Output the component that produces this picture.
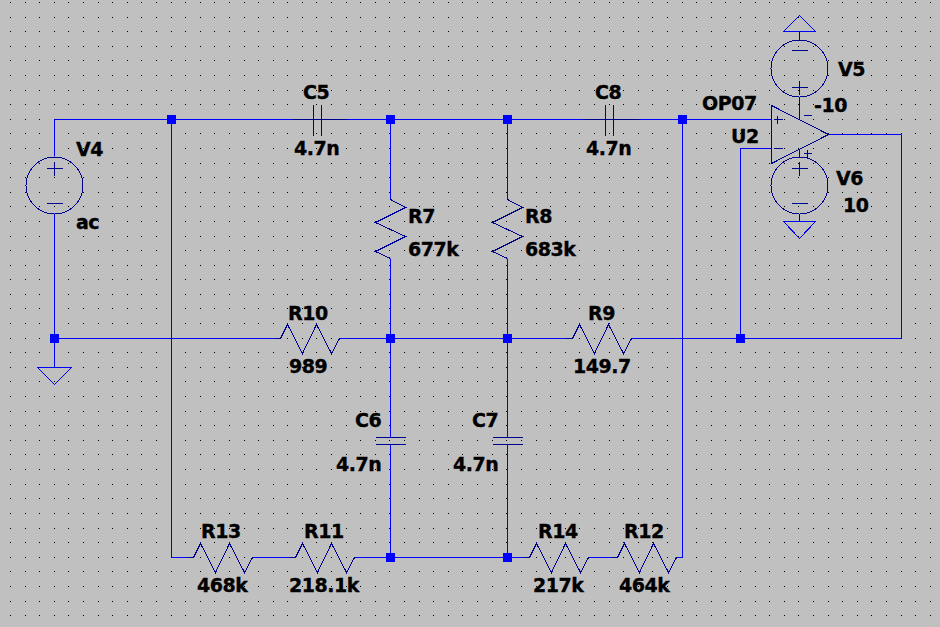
const WIRE = '#0000ff';
const PART = '#000090';

const dotsX = Array.from({ length: 65 }, (_, i) => Math.floor(10.4 + 14.6 * i));
const dotsY = Array.from({ length: 43 }, (_, i) => Math.floor(2.4 + 14.6 * i));

// wires as polylines
const wires = [
  '54,156 54,119 771,119',
  '54,213 54,367',
  '171,119 171,557 193,557',
  '252,557 295,557',
  '354,557 529,557',
  '588,557 617,557',
  '675,557 682,557 682,119',
  '390,119 390,199',
  '390,258 390,437',
  '390,444 390,557',
  '507,119 507,199',
  '507,258 507,437',
  '507,444 507,557',
  '54,338 280,338',
  '339,338 572,338',
  '631,338 901,338 901,134 828,134',
  '740,338 740,148 771,148',
];

const junctions = [
  [171, 119], [390, 119], [507, 119], [682, 119],
  [54, 338], [390, 338], [507, 338], [740, 338],
  [390, 557], [507, 557],
];

const labels: [string, number, number][] = [
  ['V4', 76, 156], ['ac', 76, 229],
  ['C5', 303, 99], ['4.7n', 294, 155],
  ['C8', 595, 99], ['4.7n', 586, 155],
  ['R7', 408, 223], ['677k', 408, 256],
  ['R8', 525, 223], ['683k', 525, 256],
  ['R10', 288, 320], ['989', 289, 373],
  ['R9', 588, 320], ['149.7', 573, 373],
  ['C6', 355, 427], ['4.7n', 336, 471],
  ['C7', 472, 427], ['4.7n', 453, 471],
  ['R13', 201, 538], ['468k', 197, 592],
  ['R11', 304, 538], ['218.1k', 289, 592],
  ['R14', 538, 538], ['217k', 533, 592],
  ['R12', 624, 538], ['464k', 619, 592],
  ['V5', 838, 76], ['-10', 814, 112],
  ['OP07', 702, 110], ['U2', 731, 143],
  ['V6', 836, 185], ['10', 843, 212],
];

function HRes({ x, y }: { x: number; y: number }) {
  const pts = [[0, 0], [7, -14], [22, 15], [36, -14], [51, 15], [59, 0]];
  return (
    <>
      <polyline points={pts.map(([a, b]) => `${x + a},${y + b}`).join(' ')} fill="none" stroke={PART} />
      <line x1={x - 7} y1={y} x2={x} y2={y} stroke={PART} />
    </>
  );
}

function VRes({ x, y }: { x: number; y: number }) {
  const pts = [[0, 0], [15, 8], [-15, 23], [15, 37], [-15, 52], [0, 59]];
  return <polyline points={pts.map(([a, b]) => `${x + a},${y + b}`).join(' ')} fill="none" stroke={PART} />;
}

function Source({ cx, cy, flip }: { cx: number; cy: number; flip?: boolean }) {
  const plusY = flip ? cy + 19 : cy - 17;
  const minusY = flip ? cy - 18 : cy + 18;
  return (
    <>
      <circle cx={cx} cy={cy} r={28.5} fill="none" stroke={PART} />
      <path d={`M${cx - 8} ${plusY}H${cx + 8}M${cx} ${plusY - 7}V${plusY + 7}M${cx - 8} ${minusY}H${cx + 8}`} stroke={PART} fill="none" />
    </>
  );
}

export default function App() {
  return (
    <div className="w-[940px] h-[627px] bg-[#c0c0c0] overflow-hidden">
      <svg width="940" height="627" viewBox="0 0 940 627" className="block" shapeRendering="crispEdges">
        {dotsY.map((y) =>
          dotsX.map((x) => <rect key={`${x}-${y}`} x={x} y={y} width="1" height="1" fill="#000" />),
        )}

        <g transform="translate(0.5 0.5)">
          {wires.map((p, i) => (
            <polyline key={i} points={p} fill="none" stroke={WIRE} shapeRendering="geometricPrecision" />
          ))}

          {/* capacitors */}
          <path d="M290 119H346M313 104V135M321 104V135M582 119H638M605 104V135M613 104V135" stroke={PART} fill="none" />
          <path d="M375 437H405M375 444H405M492 437H522M492 444H522" stroke={PART} fill="none" />

          <VRes x={390} y={199} />
          <VRes x={507} y={199} />
          <HRes x={280} y={338} />
          <HRes x={572} y={338} />
          <HRes x={193} y={557} />
          <HRes x={295} y={557} />
          <HRes x={529} y={557} />
          <HRes x={617} y={557} />

          <Source cx={54} cy={185} />
          <Source cx={799} cy={68} flip />
          <Source cx={799} cy={185} />

          {/* grounds and rails */}
          <path d="M37 367H71L54 384Z" stroke={WIRE} fill="none" />
          <path d="M783 31H815L799 15Z" stroke={WIRE} fill="none" />
          <path d="M783 221H815L799 238Z" stroke={WIRE} fill="none" />
          <path d="M799 31V39M799 97V119M799 148V156M799 213V221" stroke={PART} fill="none" />

          {/* op amp */}
          <path d="M771 105V163L828 134Z" stroke={PART} fill="none" />
          <path d="M773 119H782M777 115V123M773 148H782M803 115H811M803 153H811M807 149V157" stroke={PART} fill="none" />
        </g>

        {junctions.map(([x, y]) => (
          <rect key={`${x}-${y}`} x={x - 4} y={y - 4} width="9" height="9" fill={WIRE} />
        ))}

        {labels.map(([t, x, y], i) => (
          <text
            key={i}
            x={x}
            y={y}
            className="fill-black stroke-black [stroke-width:0.35px] font-bold text-[19px] tracking-[-0.45px] font-['DejaVu_Sans',sans-serif]"
          >
            {t}
          </text>
        ))}
      </svg>
    </div>
  );
}
